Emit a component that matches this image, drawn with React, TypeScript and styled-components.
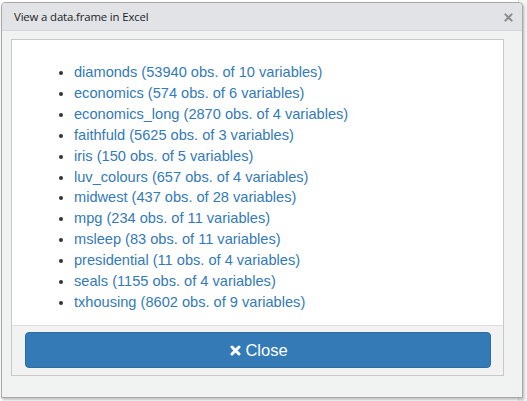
import React from "react";
import styled, { createGlobalStyle } from "styled-components";

const Global = createGlobalStyle`
  html, body { margin: 0; padding: 0; background: #ffffff; }
  body { font-family: "Liberation Sans", Arial, sans-serif; }
`;

const Page = styled.div`
  width: 527px;
  height: 401px;
  position: relative;
  overflow: hidden;
  background: #ffffff;
`;

const Backdrop = styled.div`
  position: absolute;
  right: 0;
  top: 0;
  width: 8px;
  height: 401px;
  background: #f3f4f4;
  border-left: 1px solid #e2e2e2;
`;

const Dialog = styled.div`
  position: relative;
  margin: 2px 0 0 1px;
  width: 520px;
  height: 394px;
  border: 1px solid #a8a8a8;
  border-radius: 4px 4px 0 0;
  background: #f1f2f2;
  box-shadow: 1px 2px 3px rgba(0, 0, 0, 0.25);
  display: flex;
  flex-direction: column;
`;

const Header = styled.div`
  height: 27px;
  background: #e1e3e6;
  border-bottom: 1px solid #d4d6d8;
  border-radius: 3px 3px 0 0;
  display: flex;
  align-items: center;
  justify-content: space-between;
  padding: 0 9px 0 12px;
`;

const Title = styled.span`
  font-family: "Open Sans", "Noto Sans", sans-serif;
  font-size: 11.4px;
  color: #1e1e1e;
  letter-spacing: -0.15px;
`;

const HeaderClose = styled.svg`
  width: 9px;
  height: 9px;
  margin-top: 2px;
`;

const Body = styled.div`
  padding: 8px 18px 0 9px;
`;

const Panel = styled.div`
  border: 1px solid #c9c9c9;
  background: #ffffff;
  display: flex;
  flex-direction: column;
`;

const List = styled.ul`
  margin: 0;
  height: 263px;
  padding: 22px 0 0 62px;
  font-size: 14.6px;
  line-height: 20.9px;
  color: #333;
  list-style: disc;
`;

const Item = styled.li`
  color: #333;
`;

const Link = styled.a`
  color: #337ab7;
  text-decoration: none;
  cursor: pointer;
`;

const Footer = styled.div`
  border-top: 1px solid #dddddd;
  background: #f2f2f2;
  padding: 6px 12px 7px 13px;
`;

const Button = styled.button`
  width: 100%;
  height: 36px;
  border: 1px solid #2e6da4;
  border-radius: 4px;
  background: #337ab7;
  color: #ffffff;
  font-family: "Liberation Sans", Arial, sans-serif;
  font-size: 16.5px;
  display: flex;
  align-items: center;
  justify-content: center;
  gap: 4px;
  padding: 0 0 0 2px;
  cursor: pointer;
`;

const ButtonIcon = styled.svg`
  width: 11px;
  height: 11px;
  margin-top: 1px;
`;

const datasets = [
  ["diamonds", 53940, 10],
  ["economics", 574, 6],
  ["economics_long", 2870, 4],
  ["faithfuld", 5625, 3],
  ["iris", 150, 5],
  ["luv_colours", 657, 4],
  ["midwest", 437, 28],
  ["mpg", 234, 11],
  ["msleep", 83, 11],
  ["presidential", 11, 4],
  ["seals", 1155, 4],
  ["txhousing", 8602, 9],
] as const;

export default function App() {
  return (
    <Page>
      <Global />
      <Backdrop />
      <Dialog>
        <Header>
          <Title>View a data.frame in Excel</Title>
          <HeaderClose viewBox="0 0 10 10">
            <path d="M1.5 1.5 L8.5 8.5 M8.5 1.5 L1.5 8.5" stroke="#8a8a8a" strokeWidth="2.2" strokeLinecap="round" />
          </HeaderClose>
        </Header>
        <Body>
          <Panel>
            <List>
              {datasets.map(([name, obs, vars]) => (
                <Item key={name}>
                  <Link>
                    {name} ({obs} obs. of {vars} variables)
                  </Link>
                </Item>
              ))}
            </List>
            <Footer>
              <Button>
                <ButtonIcon viewBox="0 0 11 11">
                  <path d="M2 2 L9 9 M9 2 L2 9" stroke="#ffffff" strokeWidth="3" strokeLinecap="round" />
                </ButtonIcon>
                Close
              </Button>
            </Footer>
          </Panel>
        </Body>
      </Dialog>
    </Page>
  );
}
